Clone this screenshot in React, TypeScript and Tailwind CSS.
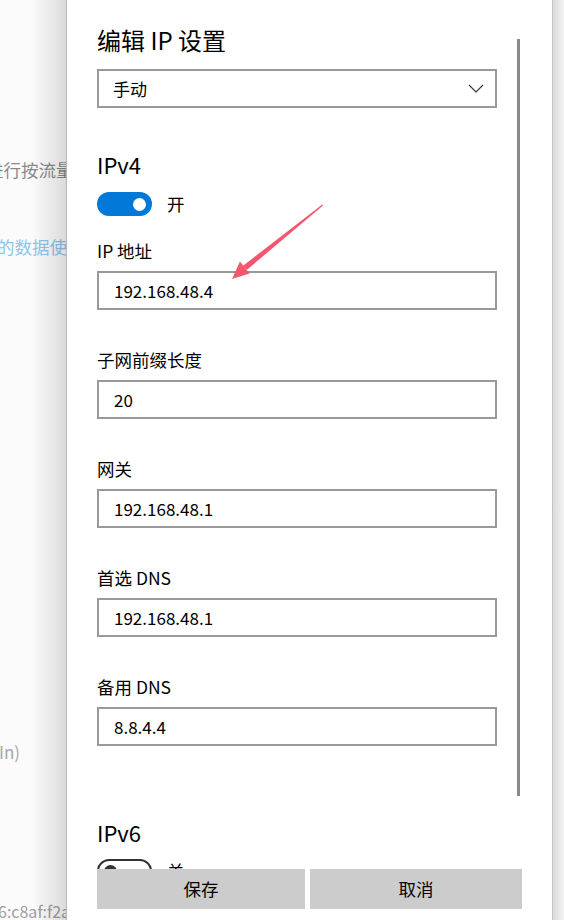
import React from "react";

const FONT = { fontFamily: '"Noto Sans CJK SC", "Noto Sans", sans-serif' };

function Field({ label, value }: { label: string; value: string }) {
  return (
    <div className="flex flex-col shrink-0">
      <div className="h-[24px] leading-[24px] text-[17.5px] text-black">{label}</div>
      <div className="mt-[8px] w-[400px] h-[39px] shrink-0 border-2 border-[#999999] bg-white flex items-center pl-[15px] text-[17px] text-black">
        {value}
      </div>
    </div>
  );
}

export default function App() {
  return (
    <div className="w-[564px] h-[920px] flex overflow-hidden bg-white relative" style={FONT}>
      {/* background page (left) */}
      <div className="w-[66px] h-full relative overflow-hidden bg-[#fbfbfb] shrink-0">
        <div className="flex flex-col whitespace-nowrap">
          <div className="mt-[158px] ml-[-14px] h-[24px] leading-[24px] text-[17.5px] text-[#8a8a8a]">进行按流量计费</div>
          <div className="mt-[53px] ml-[-3px] h-[24px] leading-[24px] text-[17.5px] text-[#8ec4ee]">的数据使用量</div>
          <div className="mt-[481px] ml-[-1px] h-[24px] leading-[24px] text-[17px] text-[#a8a8a8]">In)</div>
          <div className="mt-[135px] ml-[-2px] h-[24px] leading-[24px] text-[16px] text-[#a0a0a0]">6:c8af:f2a8</div>
        </div>
        <div className="absolute inset-y-0 right-0 w-[34px] bg-gradient-to-r from-transparent to-[rgba(0,0,0,0.13)]" />
      </div>
      <div className="w-[1px] h-full bg-[#b8b8b8] shrink-0" />

      {/* panel */}
      <div className="w-[485px] h-full bg-white relative flex flex-col shrink-0">
        <div className="h-[869px] shrink-0 overflow-hidden">
          <div className="pl-[30px] pt-[24px] flex flex-col">
            <div className="h-[32px] leading-[32px] text-[24px] text-black">编辑 IP 设置</div>
            <div className="mt-[13px] w-[400px] h-[39px] border-2 border-[#999999] flex items-center justify-between pl-[14px] pr-[11px] text-[17px] text-black">
              <span>手动</span>
              <svg width="16" height="9" viewBox="0 0 16 9" fill="none">
                <path d="M1 1 L8 8 L15 1" stroke="#333" strokeWidth="1.1" />
              </svg>
            </div>

            <div className="mt-[42px] h-[28px] leading-[28px] text-[22px] text-black">IPv4</div>
            <div className="mt-[14px] flex items-center h-[24px]">
              <div className="w-[55px] h-[24px] rounded-full bg-[#0078d7] flex items-center justify-end pr-[6px]">
                <div className="w-[13px] h-[13px] rounded-full bg-white" />
              </div>
              <span className="ml-[15px] text-[17.5px] text-black">开</span>
            </div>

            <div className="mt-[23px] flex flex-col gap-[38px]">
              <Field label="IP 地址" value="192.168.48.4" />
              <Field label="子网前缀长度" value="20" />
              <Field label="网关" value="192.168.48.1" />
              <Field label="首选 DNS" value="192.168.48.1" />
              <Field label="备用 DNS" value="8.8.4.4" />
            </div>

            <div className="mt-[72px] h-[28px] leading-[28px] text-[22px] text-black">IPv6</div>
            <div className="mt-[13px] flex items-center h-[24px]">
              <div className="w-[55px] h-[24px] rounded-full border-2 border-[#333333] flex items-center pl-[5px]">
                <div className="w-[13px] h-[13px] rounded-full bg-[#333333]" />
              </div>
              <span className="ml-[15px] text-[17.5px] text-black">关</span>
            </div>
          </div>
        </div>

        <div className="flex pl-[30px] gap-[5px] h-[40px] shrink-0">
          <div className="w-[208px] h-[40px] bg-[#cccccc] flex items-center justify-center text-[17.5px] text-black">保存</div>
          <div className="w-[212px] h-[40px] bg-[#cccccc] flex items-center justify-center text-[17.5px] text-black">取消</div>
        </div>

        {/* scrollbar */}
        <div className="absolute left-[450px] top-[39px] w-[3px] h-[757px] bg-[#8a8a8a]" />

        {/* annotation arrow */}
        <svg className="absolute left-0 top-0 pointer-events-none" width="485" height="920" viewBox="67 0 485 920">
          <polygon
            points="322.3,204.6 323.0,205.4 247.0,269.8 242.8,265.9"
            fill="#f4566e"
          />
          <polygon points="232,279 240,261.5 249.5,273.5" fill="#f4566e" />
        </svg>
      </div>

      {/* right shadow */}
      <div className="w-[1px] h-full bg-[#c4c4c4] shrink-0" />
      <div className="flex-1 h-full bg-gradient-to-r from-[#dcdcdc] to-[#f3f3f3]" />
    </div>
  );
}
